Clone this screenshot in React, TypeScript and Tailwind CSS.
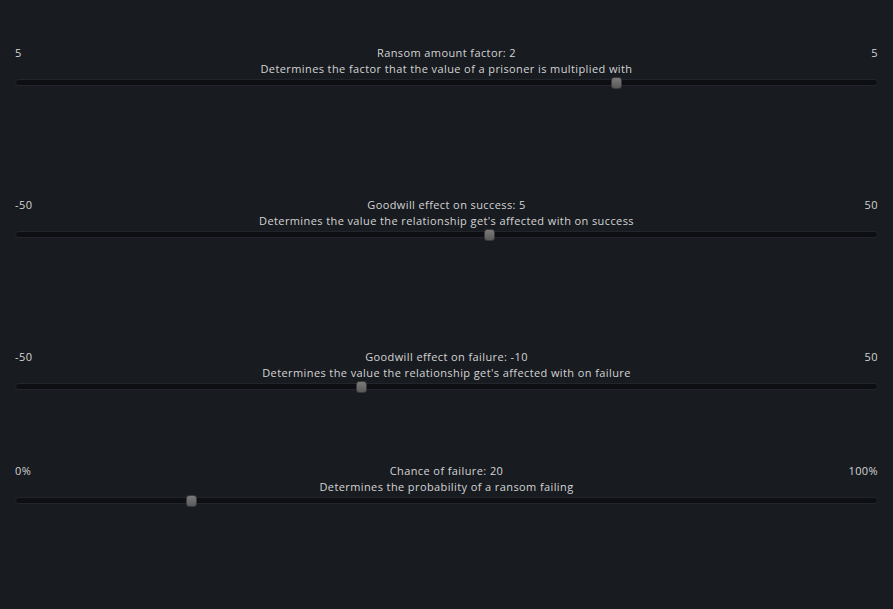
const sliders = [
  { min: '5', max: '5', title: 'Ransom amount factor: 2', desc: 'Determines the factor that the value of a prisoner is multiplied with', pos: 0.7, mt: 'mt-[44px]' },
  { min: '-50', max: '50', title: 'Goodwill effect on success: 5', desc: "Determines the value the relationship get's affected with on success", pos: 0.55, mt: 'mt-[111px]' },
  { min: '-50', max: '50', title: 'Goodwill effect on failure: -10', desc: "Determines the value the relationship get's affected with on failure", pos: 0.4, mt: 'mt-[111px]' },
  { min: '0%', max: '100%', title: 'Chance of failure: 20', desc: 'Determines the probability of a ransom failing', pos: 0.2, mt: 'mt-[73px]' },
]

function Slider({ min, max, title, desc, pos, mt }: (typeof sliders)[number]) {
  return (
    <section className={mt}>
      <div className="grid grid-cols-[1fr_auto_1fr] h-4 leading-4">
        <span>{min}</span>
        <span className="text-center">{title}</span>
        <span className="text-right">{max}</span>
      </div>
      <p className="text-center h-4 leading-4">{desc}</p>
      <div className="relative mt-[2px] h-[7px] rounded-full bg-[#0d0f12] border border-[#22262c]">
        <div
          className="absolute top-1/2 -translate-y-1/2 w-[11px] h-[12px] rounded-[3px] bg-gradient-to-b from-[#7a7a7a] to-[#5a5a5a] border border-[#3a3a3a]"
          style={{ left: `calc(${pos} * (100% - 11px))` }}
        />
      </div>
    </section>
  )
}

export default function App() {
  return (
    <main
      className="w-[893px] h-[609px] bg-[#181b20] text-[#d4d4d4] text-[11px] tracking-[0.4px] px-[15px] overflow-hidden"
      style={{ fontFamily: '"Open Sans", "DejaVu Sans", sans-serif' }}
    >
      <div className="h-px" />
      {sliders.map((s) => (
        <Slider key={s.title} {...s} />
      ))}
    </main>
  )
}
